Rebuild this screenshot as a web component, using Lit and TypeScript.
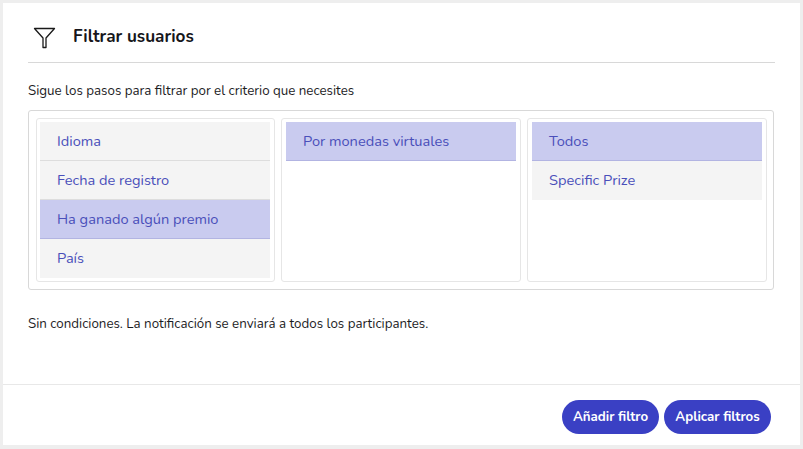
import { LitElement, html, css } from "lit";
import { customElement } from "lit/decorators.js";

const columns = [
  [["Idioma", false], ["Fecha de registro", false], ["Ha ganado algún premio", true], ["País", false]],
  [["Por monedas virtuales", true]],
  [["Todos", true], ["Specific Prize", false]],
] as [string, boolean][][];

@customElement("app-root")
export class AppRoot extends LitElement {
  static styles = css`
    :host {
      display: block;
      width: 803px;
      height: 449px;
      box-sizing: border-box;
      background: #eeeeee;
      padding: 3px 3px 4px 3px;
      font-family: "Nunito", "Lato", "Open Sans", sans-serif;
      color: #1d1d1f;
    }
    .card {
      background: #fff;
      height: 100%;
      display: flex;
      flex-direction: column;
    }
    .main {
      flex: 1;
      padding: 0 25px;
      display: flex;
      flex-direction: column;
    }
    .head {
      height: 60px;
      width: 747px;
      box-sizing: border-box;
      border-bottom: 1px solid #d8d8d8;
      display: flex;
      align-items: center;
      gap: 17px;
      padding-left: 5px;
      padding-top: 7px;
    }
    .head svg {
      display: block;
      margin-top: 2px;
    }
    h1 {
      margin: 0;
      font-size: 17.15px;
      font-weight: 700;
      color: #16161a;
    }
    .desc {
      margin: 20px 0 0;
      font-size: 13.33px;
      line-height: 16px;
    }
    .box {
      margin-top: 11px;
      width: 746px;
      height: 180px;
      box-sizing: border-box;
      border: 1px solid #d8d8d8;
      border-radius: 3px;
      padding: 7px;
      display: flex;
      gap: 6px;
    }
    .col {
      flex: none;
      width: 240px;
      box-sizing: border-box;
      border: 1px solid #e6e6e6;
      border-radius: 3px;
      padding: 3px 4px;
    }
    .col:first-child {
      width: 239px;
      padding-left: 3px;
    }
    .item {
      height: 39px;
      box-sizing: border-box;
      background: #f4f4f4;
      border-bottom: 1px solid #dddddd;
      color: #4a4fba;
      font-size: 14.6px;
      padding-left: 17px;
      display: flex;
      align-items: center;
    }
    .item:last-child { border-bottom-color: transparent; }
    .item.on {
      background: #c9cbef;
      border-bottom: 1px solid #b2b4e2;
    }
    .note {
      margin: 26px 0 0;
      font-size: 13.33px;
      line-height: 16px;
    }
    .foot {
      height: 61px;
      box-sizing: border-box;
      border-top: 1px solid #e8e8e8;
      display: flex;
      justify-content: flex-end;
      gap: 5px;
      padding: 15px 29px 0 0;
    }
    button {
      height: 34px;
      border: none;
      border-radius: 17px;
      background: #3a40c4;
      color: #fff;
      font: inherit;
      font-size: 13.3px;
      font-weight: 700;
      padding: 0;
      width: 97px;
    }
    button.wide { width: 107px; }
  `;

  render() {
    return html`<div class="card">
      <div class="main">
        <div class="head">
          <svg width="23" height="23" viewBox="0 0 23 23" fill="none" stroke="#1a1a1a" stroke-width="1.3">
            <path d="M1.5 2.5H21.5L13 12V21.5H10V12Z" stroke-linejoin="round" />
          </svg>
          <h1>Filtrar usuarios</h1>
        </div>
        <p class="desc">Sigue los pasos para filtrar por el criterio que necesites</p>
        <div class="box">
          ${columns.map(
            (c) => html`<div class="col">
              ${c.map(([t, on]) => html`<div class="item ${on ? "on" : ""}">${t}</div>`)}
            </div>`
          )}
        </div>
        <p class="note">Sin condiciones. La notificación se enviará a todos los participantes.</p>
      </div>
      <div class="foot">
        <button>Añadir filtro</button>
        <button class="wide">Aplicar filtros</button>
      </div>
    </div>`;
  }
}
